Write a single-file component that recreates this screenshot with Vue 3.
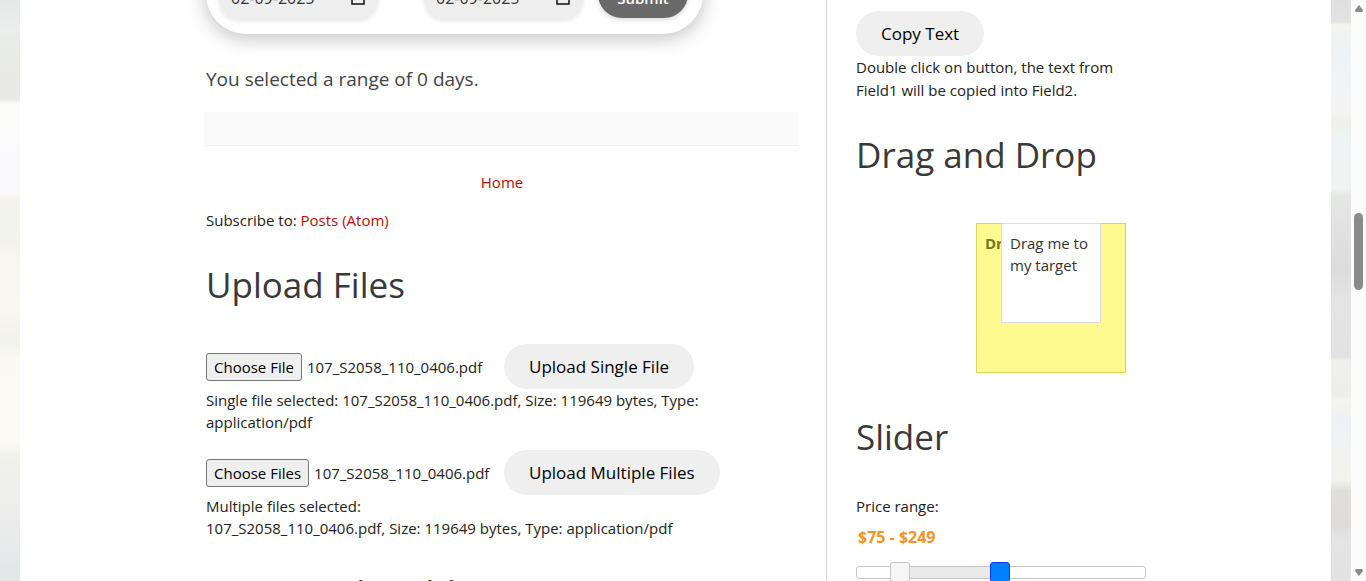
<script setup>
import { onMounted, ref } from 'vue'

const fileName = '107_S2058_110_0406.pdf'
const single = ref(null)
const multiple = ref(null)
const ticks = { low: 75, high: 249, max: 500 }
const pct = (v) => (v / ticks.max) * 100 + '%'

onMounted(() => {
  for (const field of [single.value, multiple.value]) {
    const transfer = new DataTransfer()
    transfer.items.add(new File(['pdf'], fileName, { type: 'application/pdf' }))
    field.files = transfer.files
  }
})
</script>

<template>
  <div class="shell">
    <div class="edge left"></div>
    <div class="page">
      <main class="main">
        <form class="range" @submit.prevent>
          <div class="date">
            <input type="text" value="02-09-2025" aria-label="Start date" />
            <svg viewBox="0 0 16 16"><path d="M2 3h12v11H2zM2 4h12v2H2zM5 1v3M11 1v3" /></svg>
          </div>
          <div class="date">
            <input type="text" value="02-09-2025" aria-label="End date" />
            <svg viewBox="0 0 16 16"><path d="M2 3h12v11H2zM2 4h12v2H2zM5 1v3M11 1v3" /></svg>
          </div>
          <button class="submit">Submit</button>
        </form>
        <p class="result">You selected a range of 0 days.</p>
        <div class="strip"></div>
        <nav class="home"><a href="#">Home</a></nav>
        <p class="feed">Subscribe to: <a href="#">Posts (Atom)</a></p>
        <h2>Upload Files</h2>
        <form class="upload" @submit.prevent>
          <div class="row">
            <input ref="single" type="file" aria-label="Single file" />
            <button class="pill">Upload Single File</button>
          </div>
          <p>Single file selected: {{ fileName }}, Size: 119649 bytes, Type: application/pdf</p>
        </form>
        <form class="upload" @submit.prevent>
          <div class="row">
            <input ref="multiple" type="file" multiple aria-label="Multiple files" />
            <button class="pill">Upload Multiple Files</button>
          </div>
          <p>Multiple files selected:<br />{{ fileName }}, Size: 119649 bytes, Type: application/pdf</p>
        </form>
        <h2>Static Web Table</h2>
      </main>
      <aside class="side">
        <button class="pill">Copy Text</button>
        <p class="hint">Double click on button, the text from Field1 will be copied into Field2.</p>
        <h2>Drag and Drop</h2>
        <div class="target">
          <p>Drop here</p>
          <div class="drag">Drag me to my target</div>
        </div>
        <h2>Slider</h2>
        <label class="price" for="amount">Price range:</label>
        <input id="amount" class="amount" type="text" readonly value="$75 - $249" />
        <div class="slider">
          <div class="fill" :style="{ left: pct(ticks.low), right: pct(ticks.max - ticks.high) }"></div>
          <button class="handle" aria-label="Minimum price" :style="{ left: pct(ticks.low) }"></button>
          <button class="handle active" aria-label="Maximum price" :style="{ left: pct(ticks.high) }"></button>
        </div>
      </aside>
    </div>
    <div class="edge right"></div>
    <div class="scroll">
      <svg viewBox="0 0 10 7"><path d="M5 0 9 5Q9 7 8 7H2Q1 7 1 5Z" /></svg>
      <div class="thumb"></div>
      <svg class="down" viewBox="0 0 10 7"><path d="M5 7 9 2Q9 0 8 0H2Q1 0 1 2Z" /></svg>
    </div>
  </div>
</template>

<style>
body { margin: 0; }
</style>

<style scoped>
* { box-sizing: border-box; }
.shell {
  display: flex;
  height: 100vh;
  overflow: hidden;
  background: #fff;
  color: #222;
  font: 15px/22px "Open Sans", "Noto Sans", sans-serif;
}
p, h2 { margin: 0; }
a { color: #b30d0d; text-decoration: none; }
input, button { font-family: inherit; }
.edge { flex: 0 0 20px; }
.left {
  background: linear-gradient(#e6e7e7 0, #eceded 30px, #e9ebe6 50px, #e8e8e8 98px, #fbfcf8 104px, #fafafc 150px, #fafafc 194px, #f3f3ec 198px, #f2f2ed 240px, #f8f6f0 260px, #f8f7f0 310px, #f1f2eb 340px, #fafaf3 360px, #fbfbf4 440px, #f0f1ec 460px, #eff0ee 490px, #ebebeb 530px, #e3e6e8 570px, #dfe9e2 581px);
}
.right {
  background: linear-gradient(#dfdfdf 0, #e3e3e3 22px, #f4f5f0 25px, #eff2f5 50px, #f5f5f5 110px, #eff0ec 122px, #eff2f3 135px, #f1f2f2 188px, #e5e7e5 196px, #e1e1e1 230px, #dcdcdc 270px, #e4e4e4 300px, #e2e2e2 357px, #f0f0ed 361px, #ededed 395px, #f4f5ef 400px, #eff0f4 420px, #f3f4ef 480px, #e0dfde 490px, #dedcdb 525px, #e4e4e4 540px, #e2e2e2 581px);
}
.page {
  flex: 1;
  display: grid;
  grid-template-columns: minmax(0, 807fr) minmax(0, 504fr);
}
.main {
  padding: 0 28px 0 186px;
  border-right: 1px solid #d8d8d8;
  margin-top: -46px;
}
.range {
  display: flex;
  align-items: center;
  width: 497px;
  height: 80px;
  padding: 0 13px;
  border-radius: 40px;
  box-shadow: 0 4px 20px rgba(0, 0, 0, 0.25);
}
.date {
  display: flex;
  align-items: center;
  width: 159px;
  height: 50px;
  margin-right: 46px;
  padding: 8px 12px 0 12px;
  border-radius: 20px;
  background: #eee;
  box-shadow: 0 2px 5px rgba(0, 0, 0, 0.1);
}
.date input {
  flex: 1;
  min-width: 0;
  padding: 0;
  border: 0;
  background: none;
  color: #333;
  font-size: 16px;
}
.date svg { width: 16px; height: 16px; fill: none; stroke: #111; stroke-width: 1.5; }
.date + .submit { margin-left: -31px; }
.submit {
  width: 90px;
  height: 48px;
  padding: 8px 0 0;
  border: 0;
  border-radius: 24px;
  background: #696969;
  color: #fff;
  font-size: 15px;
  font-weight: 600;
  box-shadow: 0 2px 5px rgba(0, 0, 0, 0.15);
}
.result { margin-top: 32px; color: #444; font-size: 19px; line-height: 26px; }
.strip { height: 34px; margin: 20px 0 0 -2px; background: #fafafa; border-bottom: 1px solid #eee; }
.home { margin-top: 25px; text-align: center; }
.feed { margin-top: 16px; }
h2 { color: #393939; font-size: 35px; font-weight: 400; line-height: 48px; }
.main h2 { margin: 30px 0 35px; }
.main .upload { margin-bottom: 17px; }
.row { display: flex; align-items: center; }
.row input { width: 298px; color: #222; font-size: 15px; }
.row input::file-selector-button {
  height: 28px;
  margin: 0 5px 0 0;
  padding: 0 7px;
  border: 1px solid #767676;
  border-radius: 3px;
  background: #efefef;
  color: #000;
  font: inherit;
}
.pill {
  height: 45px;
  padding: 0 25px;
  border: 0;
  border-radius: 23px;
  background: #efefef;
  color: #000;
  font-size: 17px;
  white-space: nowrap;
}
.side { padding: 11px 185px 0 29px; }
.hint { line-height: 23px; }
.side h2 { margin-top: 29px; }
.target {
  position: relative;
  width: 150px;
  height: 150px;
  margin: 44px 0 40px 120px;
  padding: 8px;
  border: 1px solid #dad55e;
  background: #fffa90;
  color: #777620;
  font-weight: 700;
}
.drag {
  position: absolute;
  top: -1px;
  left: 24px;
  width: 100px;
  height: 100px;
  padding: 8px 6px 8px 8px;
  border: 1px solid #ddd;
  background: #fff;
  color: #333;
  font-weight: 400;
}
.price { display: block; margin-top: 34px; }
.amount {
  display: block;
  width: 100%;
  height: 24px;
  margin-top: 8px;
  padding: 0 2px;
  border: 0;
  color: #f6931f;
  font-size: 16px;
  font-weight: 700;
}
.slider { position: relative; height: 13px; margin-top: 17px; border: 1px solid #c5c5c5; border-radius: 3px; }
.fill { position: absolute; top: 0; bottom: 0; background: #e9e9e9; }
.handle {
  position: absolute;
  top: -5px;
  width: 20px;
  height: 20px;
  margin-left: -10px;
  padding: 0;
  border: 1px solid #c5c5c5;
  border-radius: 3px;
  background: #f6f6f6;
}
.active { border-color: #003eff; background: #007fff; }
.scroll {
  flex: 0 0 15px;
  display: flex;
  flex-direction: column;
  align-items: center;
  padding: 5px 0;
  background: #fcfcfc;
}
.scroll svg { width: 10px; height: 7px; fill: #8b8b8b; }
.thumb { width: 9px; height: 77px; margin-top: 201px; border-radius: 5px; background: #8b8b8b; }
.scroll .down { margin-top: auto; }
</style>
